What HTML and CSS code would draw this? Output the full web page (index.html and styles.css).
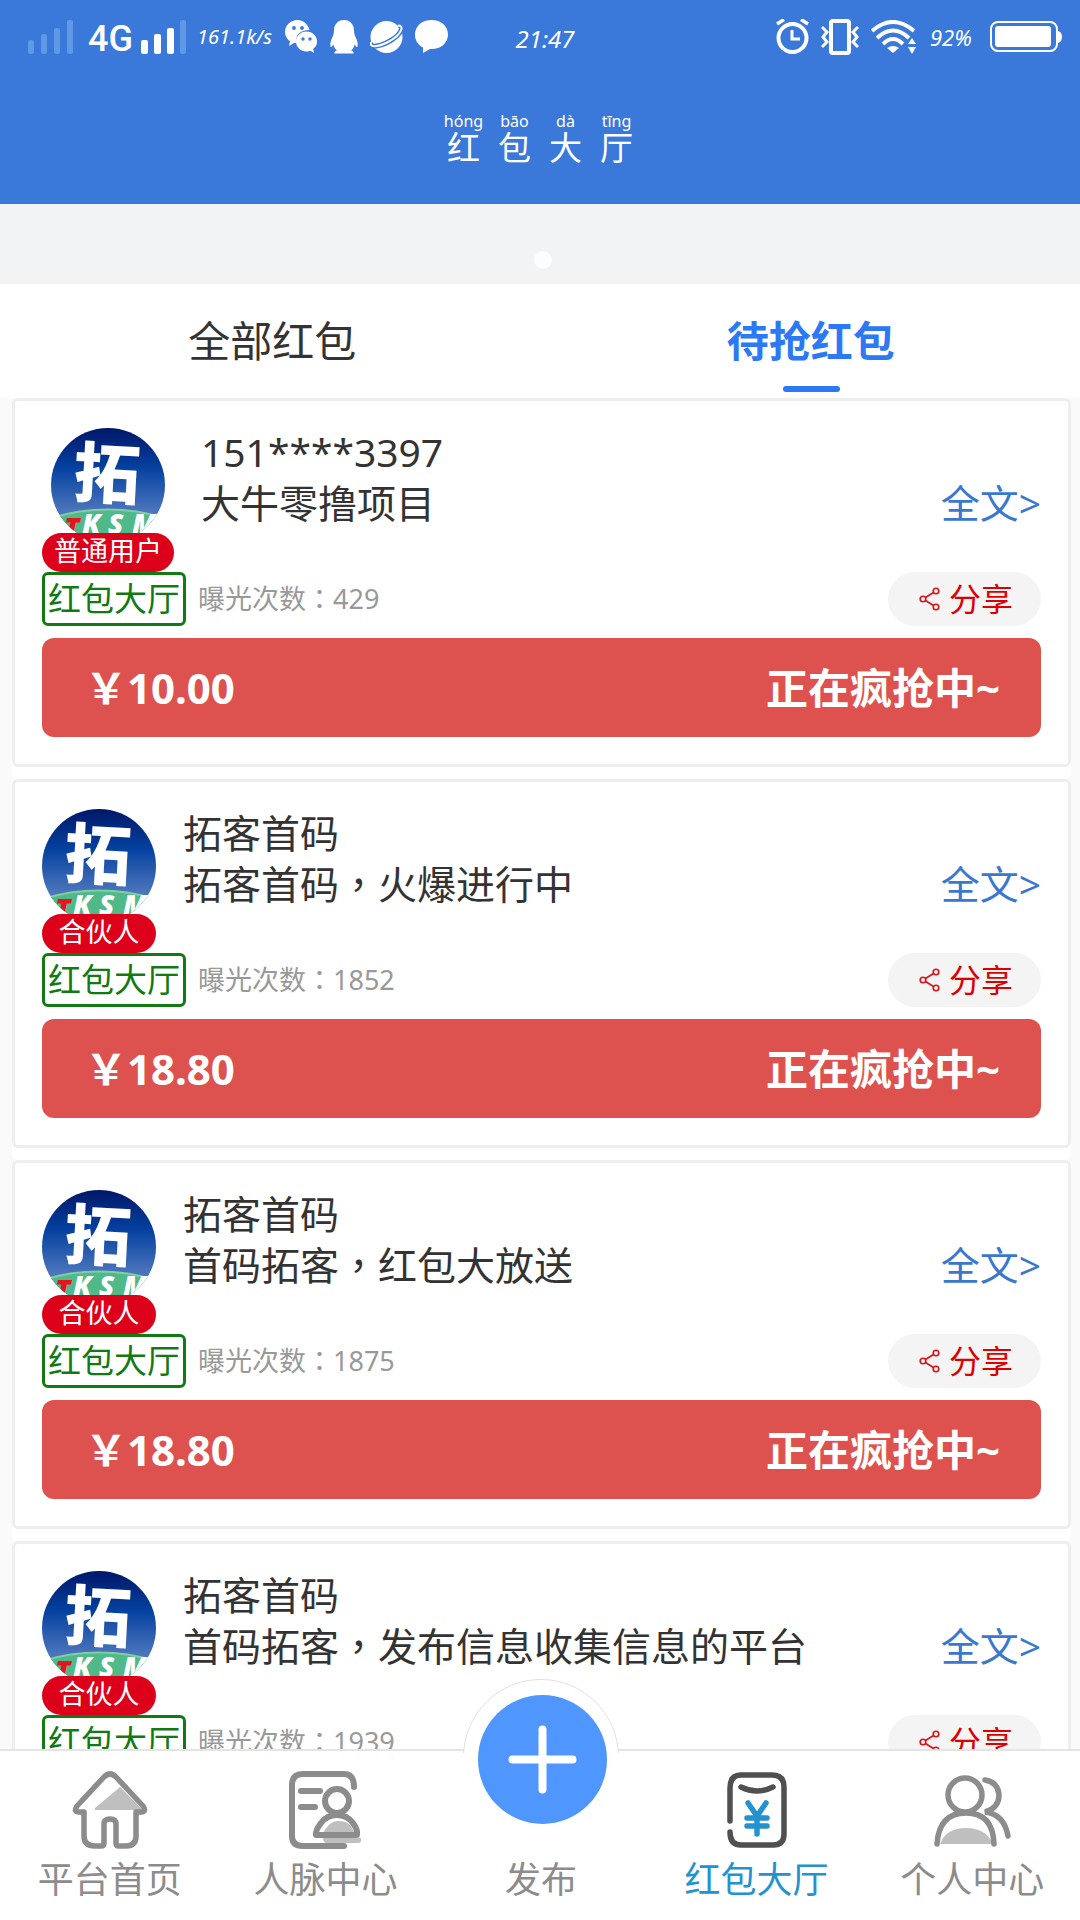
FILE: index.html
```html
<!DOCTYPE html>
<html lang="zh-CN">
<head>
<meta charset="utf-8">
<meta name="viewport" content="width=device-width, initial-scale=1">
<title>红包大厅</title>
<link rel="stylesheet" href="styles.css">
</head>
<body>
<svg class="defs" aria-hidden="true">
  <defs>
    <linearGradient id="sky" x1="0" y1="0" x2="0" y2="1">
      <stop offset="0" stop-color="#001768"/>
      <stop offset=".35" stop-color="#0541a0"/>
      <stop offset=".72" stop-color="#4a74bb"/>
    </linearGradient>
    <clipPath id="round"><circle cx="57" cy="57" r="57"/></clipPath>
    <symbol id="avatar" viewBox="0 0 114 114">
      <g clip-path="url(#round)">
        <rect width="114" height="114" fill="url(#sky)"/>
        <path d="M0 90Q57 73 114 90V114H0Z" fill="#4fb98a"/>
        <path d="M0 90Q57 73 114 90" fill="none" stroke="#7fcfa0" stroke-width="2"/>
        <text class="logo-char" x="23" y="70" transform="rotate(3 57 45)">拓</text>
        <text class="logo-word" x="31 57 81" y="106">KSM</text>
        <text class="logo-word logo-word-red" x="13" y="110">T</text>
      </g>
    </symbol>
    <symbol id="share" viewBox="0 0 21 24">
      <g fill="none" stroke="#d7141c" stroke-width="1.6"><circle cx="4" cy="12" r="2.8"/><circle cx="17" cy="4" r="2.8"/><circle cx="17" cy="20" r="2.8"/><path d="M6.4 10.5L14.6 5.5M6.4 13.5l8.2 5"/></g>
    </symbol>
  </defs>
</svg>
<div class="app">
  <header class="header">
    <div class="status">
      <div class="status-side">
        <svg width="46" height="34" viewBox="0 0 46 34" fill="#5e98e6"><rect y="20" width="6" height="14" rx="2"/><rect x="13" y="14" width="6" height="20" rx="2"/><rect x="26" y="8" width="6" height="26" rx="2"/><rect x="39" width="6" height="34" rx="2"/></svg>
        <span class="network">4G</span>
        <svg width="46" height="34" viewBox="0 0 46 34" fill="#fff"><rect y="20" width="7" height="14" rx="2"/><rect x="13" y="14" width="7" height="20" rx="2"/><rect x="26" y="8" width="7" height="26" rx="2"/><rect x="39" width="6" height="34" rx="2" fill="#5e98e6"/></svg>
        <span class="hand speed">161.1k/s</span>
        <div class="status-apps">
          <svg width="33" height="34" viewBox="0 0 33 34"><path d="M12.500 0C5.500 0 0 5 0 12c0 4 2 7 5 9.500L4 26l5-3h2.500C10 15 15 10 24.500 10C23 4 18 0 12.500 0z" fill="#fff"/><path d="M21.500 11.500C15.500 11.500 11 16 11 21.500S15.500 31.500 21.500 31.500c1.500 0 3-.3 4-.7L29 33l-.8-4.200C31 27 32 24.500 32 21.500C32 16 27.500 11.500 21.500 11.500z" fill="#fff"/><g fill="#3a78da"><circle cx="9" cy="8" r="1.900"/><circle cx="17" cy="8" r="1.900"/><circle cx="18" cy="19" r="1.700"/><circle cx="25" cy="19" r="1.700"/></g></svg>
          <svg width="28" height="34" viewBox="0 0 28 34" fill="#fff"><path d="M14 0C7.500 0 4 5 4 10c0 3-.5 5-2 8C.5 21 0 24 .5 27c.8.5 2-1 2.800-2.500C4 27 5 29 7 30.500c-2 .5-3 1.500-2.500 3H14h9.500c.5-1.500-.5-2.500-2.500-3c2-1.500 3-3.500 3.700-6c.8 1.500 2 3 2.800 2.500c.5-3 0-6-1.500-9c-1.500-3-2-5-2-8C24 5 20.500 0 14 0z"/></svg>
          <svg width="33" height="34" viewBox="0 0 33 34"><circle cx="16.500" cy="17" r="16" fill="#fff"/><path d="M28 5Q32 5 31.500 9Q30 15 20 21Q9 27 2.500 26Q0 25 1 22" fill="none" stroke="#3a78da" stroke-width="5"/><path d="M28 5.500Q32 5.500 31.500 9Q30 15 20 21Q9 27 2.500 26Q0 25 1 22" fill="none" stroke="#fff" stroke-width="2"/><path d="M27 8Q27 13 18 18.500Q10 23 3 23A16 16 0 0 1 27 8Z" fill="#fff"/></svg>
          <svg width="33" height="34" viewBox="0 0 33 34" fill="#fff"><path d="M16.500 0C7 0 0 6 0 14.500c0 6 3 10.500 8 13V33l7-4h1.500C26 29 33 23 33 14.500S26 0 16.500 0z"/></svg>
        </div>
      </div>
      <time class="hand time">21:47</time>
      <div class="status-side status-end">
        <svg width="33" height="36" viewBox="0 0 33 36" fill="none" stroke="#fff"><circle cx="16.500" cy="19" r="14" stroke-width="4"/><path d="M16 11v9h8" stroke-width="3"/><path d="M1 5l7-4.500M32 5l-7-4.500" stroke-width="3.500"/></svg>
        <svg width="38" height="36" viewBox="0 0 38 36" fill="none" stroke="#fff"><rect x="10" y="2" width="18" height="32" rx="2" stroke-width="4"/><path d="M1 8l5 5l-4 5l4 5l-5 5M37 8l-5 5l4 5l-4 5l5 5" stroke-width="3"/></svg>
        <svg width="47" height="34" viewBox="0 0 47 34"><g fill="none" stroke="#fff" stroke-width="4"><path d="M1 11Q22 -7 43 11"/><path d="M6 18Q22 3 38 18"/><path d="M12 24Q22 14 32 24"/></g><path d="M22 33l-6-5q6-4 12 0zM41 18l4 6h-8zM41 34l4-7h-8z" fill="#fff"/></svg>
        <span class="hand percent">92%</span>
        <svg width="72" height="32" viewBox="0 0 72 32"><rect x="1" y="1" width="66" height="29" rx="7" fill="none" stroke="#fff" stroke-width="2"/><rect x="5" y="5" width="56" height="21" rx="3" fill="#fff"/><path d="M68 10q4 1 4 6t-4 6z" fill="#fff"/></svg>
      </div>
    </div>
    <h1 class="title">
      <span class="glyph"><span class="pinyin">hóng</span>红</span>
      <span class="glyph"><span class="pinyin">bāo</span>包</span>
      <span class="glyph"><span class="pinyin">dà</span>大</span>
      <span class="glyph"><span class="pinyin">tīng</span>厅</span>
    </h1>
  </header>
  <div class="banner"><span class="dot"></span></div>
  <div class="tabs">
    <button class="tab" type="button">全部红包</button>
    <button class="tab tab-active" type="button">待抢红包</button>
  </div>
  <main class="list">
    <article class="card">
      <div class="card-head">
        <div class="user"><svg class="avatar"><use href="#avatar"/></svg><span class="badge">普通用户</span></div>
        <div class="body"><p>151****3397</p><div class="summary"><p>大牛零撸项目</p><a class="more" href="#">全文&gt;</a></div></div>
      </div>
      <div class="meta"><span class="tag">红包大厅</span><span class="views">曝光次数<span class="punct" lang="zh-TW">：</span>429</span><button class="share" type="button"><svg width="21" height="24"><use href="#share"/></svg>分享</button></div>
      <button class="grab" type="button"><span>￥10.00</span><span>正在疯抢中~</span></button>
    </article>
    <article class="card">
      <div class="card-head">
        <div class="user"><svg class="avatar"><use href="#avatar"/></svg><span class="badge">合伙人</span></div>
        <div class="body"><p>拓客首码</p><div class="summary"><p>拓客首码<span class="punct" lang="zh-TW">，</span>火爆进行中</p><a class="more" href="#">全文&gt;</a></div></div>
      </div>
      <div class="meta"><span class="tag">红包大厅</span><span class="views">曝光次数<span class="punct" lang="zh-TW">：</span>1852</span><button class="share" type="button"><svg width="21" height="24"><use href="#share"/></svg>分享</button></div>
      <button class="grab" type="button"><span>￥18.80</span><span>正在疯抢中~</span></button>
    </article>
    <article class="card">
      <div class="card-head">
        <div class="user"><svg class="avatar"><use href="#avatar"/></svg><span class="badge">合伙人</span></div>
        <div class="body"><p>拓客首码</p><div class="summary"><p>首码拓客<span class="punct" lang="zh-TW">，</span>红包大放送</p><a class="more" href="#">全文&gt;</a></div></div>
      </div>
      <div class="meta"><span class="tag">红包大厅</span><span class="views">曝光次数<span class="punct" lang="zh-TW">：</span>1875</span><button class="share" type="button"><svg width="21" height="24"><use href="#share"/></svg>分享</button></div>
      <button class="grab" type="button"><span>￥18.80</span><span>正在疯抢中~</span></button>
    </article>
    <article class="card">
      <div class="card-head">
        <div class="user"><svg class="avatar"><use href="#avatar"/></svg><span class="badge">合伙人</span></div>
        <div class="body"><p>拓客首码</p><div class="summary"><p>首码拓客<span class="punct" lang="zh-TW">，</span>发布信息收集信息的平台</p><a class="more" href="#">全文&gt;</a></div></div>
      </div>
      <div class="meta"><span class="tag">红包大厅</span><span class="views">曝光次数<span class="punct" lang="zh-TW">：</span>1939</span><button class="share" type="button"><svg width="21" height="24"><use href="#share"/></svg>分享</button></div>
    </article>
  </main>
  <nav class="nav">
    <a class="nav-item" href="#">
      <svg class="nav-icon" viewBox="0 0 80 80"><path d="M50 17L73 40H26Q24 40 25 38Z" fill="#bfbfbf"/><path d="M34 7Q40 1 46 7L73 36Q77 42 71 42H66V66Q66 76 56 76H49Q46 76 46 73V54Q46 49 40 49T34 54V73Q34 76 31 76H25Q14 76 14 66V42H9Q3 42 7 36Z" fill="none" stroke="#8c8c8c" stroke-width="5.500" stroke-linejoin="round"/></svg>
      平台首页
    </a>
    <a class="nav-item" href="#">
      <svg class="nav-icon" viewBox="0 0 80 80"><path d="M38 68H76Q77 73 73 73H42Q38 73 38 68ZM38 63Q45 50 54 51Q66 51 69 63Z" fill="#bfbfbf"/><g fill="none" stroke="#8c8c8c" stroke-width="6" stroke-linecap="round"><path d="M69 17Q69 4 59 4H18Q7 4 7 15V66Q7 76 18 76H59M16 21H35M16 37H30"/><circle cx="52" cy="31" r="12"/><path d="M31 65Q30 61 36 53Q42 45 52 45T68 53Q73 60 72 65H31Z" stroke-linejoin="round"/></g></svg>
      人脉中心
    </a>
    <a class="nav-item" href="#">
      <span class="halo"><span class="halo-ring"></span></span>
      <svg class="plus" viewBox="0 0 129 129"><circle cx="64.500" cy="64.500" r="64.500" fill="#5096ff"/><path d="M34.500 64.500h60M64.500 34.500v60" stroke="#fff" stroke-width="8" stroke-linecap="round"/></svg>
      <span class="nav-icon"></span>
      发布
    </a>
    <a class="nav-item nav-active" href="#">
      <svg class="nav-icon" viewBox="0 0 80 80"><g fill="none" stroke="#505050" stroke-width="5.500" stroke-linecap="round"><path d="M13 51V18Q13 5 24 5H55Q67 5 67 17V64Q67 75 56 75H24Q13 75 13 62"/><path d="M24 17Q40 25 56 17"/></g><path d="M31 33L40 46M49 33L40 46V64M30 48H50M30 56H50" fill="none" stroke="#2592d0" stroke-width="5.500" stroke-linecap="round"/></svg>
      红包大厅
    </a>
    <a class="nav-item" href="#">
      <svg class="nav-icon" viewBox="0 0 80 80"><path d="M8 74Q14 58 34 58T61 74Z" fill="#bfbfbf"/><g fill="none" stroke="#8c8c8c" stroke-width="5.500" stroke-linecap="round"><circle cx="33" cy="25" r="17"/><path d="M5 74Q7 43 34 43T62 74M53 10Q66 12 67 25Q67 38 53 42Q72 44 76 66"/></g></svg>
      个人中心
    </a>
  </nav>
</div>
</body>
</html>
```

FILE: styles.css
```css
* { box-sizing: border-box; margin: 0; padding: 0; }

body {
  font-family: "Noto Sans", "Noto Sans CJK SC", sans-serif;
  color: #333;
  background: #fff;
}

button { border: 0; background: none; font: inherit; color: inherit; }
a { color: inherit; text-decoration: none; }
svg { display: block; flex: none; }
.defs { position: absolute; width: 0; height: 0; }

.app { display: flex; flex-direction: column; height: 100vh; }

/* Header */
.header { flex: none; height: 204px; background: #3a78da; color: #fff; }
.status {
  display: grid;
  grid-template-columns: 1fr auto 1fr;
  align-items: center;
  height: 74px;
  padding: 0 18px 0 28px;
}
.status-side { display: flex; align-items: center; }
.status-end { justify-content: flex-end; gap: 12px; }
.status-apps { display: flex; gap: 12px; }
.network { width: 67px; padding-left: 14px; font: 500 36px/32px Roboto, sans-serif; padding-top: 4px; }
.hand { font-size: 20px; font-style: italic; line-height: 36px; }
.time { font-size: 24px; padding-top: 4px; }
.speed { width: 98px; padding-left: 10px; }
.percent { width: 48px; font-size: 22px; }
.title {
  display: flex;
  justify-content: center;
  gap: 18px;
  padding-top: 38px;
  font-size: 33px;
  font-weight: 400;
  line-height: 36px;
}
.glyph { display: flex; flex-direction: column; align-items: center; width: 33px; }
.pinyin { font-size: 16px; line-height: 18px; }

.banner {
  display: flex;
  flex: none;
  justify-content: center;
  align-items: flex-end;
  height: 80px;
  padding: 0 0 15px 6px;
  background: #f2f3f5;
}
.dot { width: 18px; height: 18px; border-radius: 50%; background: #fcfdff; }

/* Tabs */
.tabs { display: grid; flex: none; grid-template-columns: 1fr 1fr; padding-left: 3px; }
.tab { position: relative; height: 114px; font-size: 42px; line-height: 60px; }
.tab-active { color: #2d78f4; font-weight: 700; }
.tab-active::after {
  content: "";
  position: absolute;
  bottom: 6px;
  left: 50%;
  width: 57px;
  height: 6px;
  margin-left: -28px;
  border-radius: 3px;
  background: #2d78f4;
}

/* Cards */
.list {
  flex: 1;
  min-height: 0;
  padding: 0 9px 0 12px;
  overflow-y: auto;
  scrollbar-width: none;
  background: #fafafa;
}
.card {
  margin-bottom: 12px;
  padding: 27px;
  border: 3px solid #eee;
  border-radius: 6px;
  background: #fff;
  box-shadow: 0 12px #fff;
}
.card-head { display: flex; gap: 27px; font-size: 39px; line-height: 48px; }
.user { display: flex; flex: none; flex-direction: column; align-items: center; }
.avatar { width: 114px; height: 114px; }
.logo-char { fill: #fff; font: 900 66px "Noto Sans CJK SC", sans-serif; }
.logo-word { fill: #fff; font: italic 900 28px "Open Sans", sans-serif; }
.logo-word-red { fill: #e3151f; }
.badge {
  z-index: 1;
  min-width: 114px;
  height: 39px;
  margin-top: -9px;
  padding: 0 12px;
  border-radius: 20px;
  background: #dd001b;
  color: #fff;
  font-size: 27px;
  line-height: 36px;
  text-align: center;
}
.body { display: flex; flex: 1; flex-direction: column; gap: 3px; min-width: 0; }
.summary { display: flex; justify-content: space-between; }
.more { color: #3a78cf; }
.punct { font-family: "Noto Sans CJK TC", sans-serif; line-height: 1; }
.meta { display: flex; align-items: center; }
.tag {
  height: 54px;
  padding: 0 3px;
  border: 3px solid #127a12;
  border-radius: 6px;
  color: #127a12;
  font-size: 33px;
  line-height: 48px;
}
.views { flex: 1; padding-left: 12px; color: #999; font-size: 27px; line-height: 36px; }
.share {
  display: flex;
  justify-content: center;
  align-items: center;
  gap: 9px;
  width: 153px;
  height: 54px;
  padding-left: 3px;
  border-radius: 27px;
  background: #f4f4f4;
  color: #dc0000;
  font-size: 32px;
  line-height: 48px;
}
.grab {
  display: flex;
  justify-content: space-between;
  align-items: center;
  width: 100%;
  height: 99px;
  margin-top: 12px;
  padding: 0 41px 0 43px;
  border-radius: 12px;
  background: #dd524f;
  color: #fff;
  font-size: 42px;
  font-weight: 700;
  line-height: 60px;
}

/* Bottom navigation */
.nav {
  position: relative;
  z-index: 2;
  display: grid;
  flex: none;
  grid-template-columns: repeat(5, 1fr);
  height: 171px;
  padding-left: 2px;
  border-top: 2px solid #e4e4e4;
  background: #fff;
}
.nav-item {
  position: relative;
  display: flex;
  flex-direction: column;
  align-items: center;
  padding-top: 19px;
  color: #8c8c8c;
  font-size: 36px;
  line-height: 60px;
}
.nav-icon { width: 80px; height: 80px; }
.nav-active { color: #2592d0; }
.halo {
  position: absolute;
  top: -72px;
  left: 50%;
  width: 156px;
  height: 74px;
  margin-left: -78px;
  overflow: hidden;
}
.halo-ring {
  display: block;
  height: 156px;
  border: 1px solid #e0e0e0;
  border-radius: 50%;
  background: #fff;
}
.plus { position: absolute; top: -56px; left: 50%; width: 129px; margin-left: -63px; }
```
